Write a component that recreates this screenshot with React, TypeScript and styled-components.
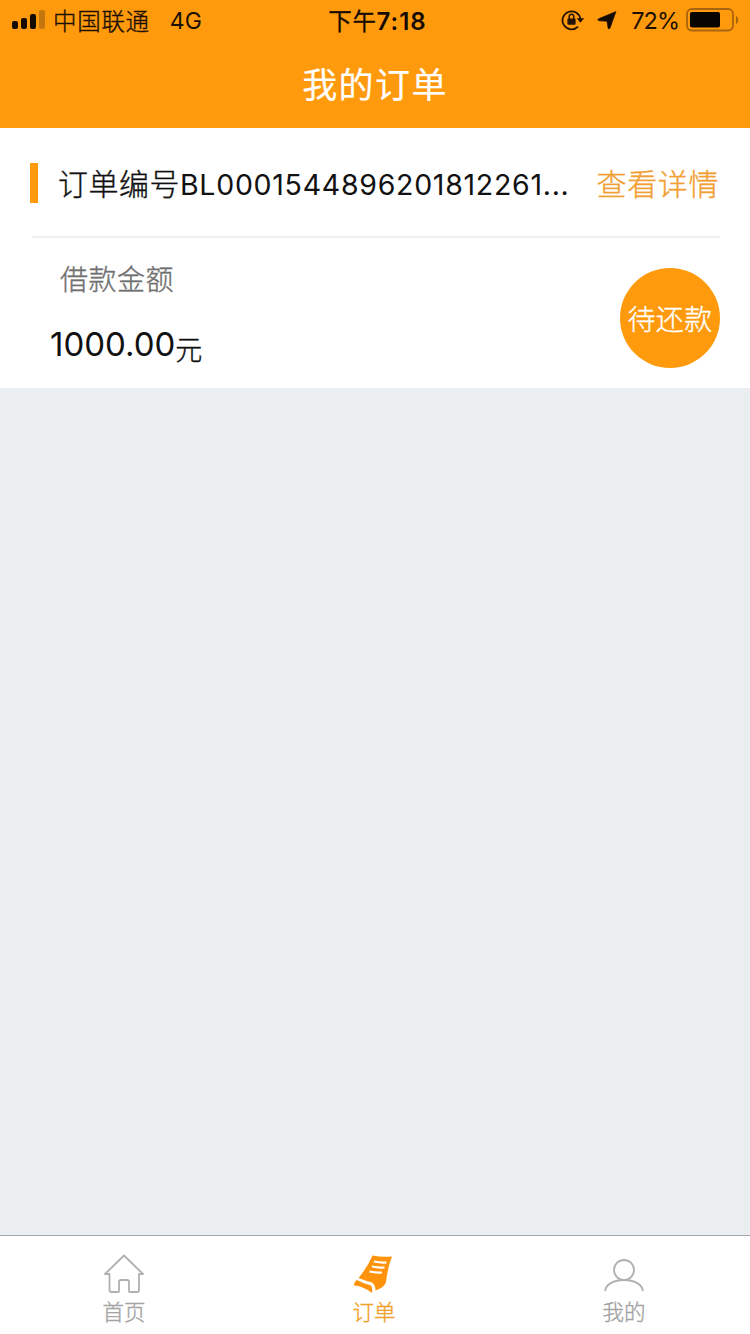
import React from "react";
import styled, { createGlobalStyle } from "styled-components";

const ORANGE = "#ff9a0c";

const GlobalStyle = createGlobalStyle`
  * { box-sizing: border-box; }
  body {
    margin: 0;
    background: #eaeef1;
    font-family: Inter, "Noto Sans CJK SC", sans-serif;
    color: #111;
  }
`;

const Screen = styled.div`
  width: 750px;
  height: 1334px;
  display: flex;
  flex-direction: column;
  overflow: hidden;
  background: #eaeef1;
`;

const Header = styled.header`
  height: 128px;
  flex: none;
  background: ${ORANGE};
`;

const StatusBar = styled.div`
  height: 41px;
  display: grid;
  grid-template-columns: 1fr auto 1fr;
  align-items: center;
  padding: 0 11px 0 12px;
  color: #1c1004;
`;

const StatusGroup = styled.div<{ $end?: boolean }>`
  display: flex;
  align-items: center;
  justify-content: ${(p) => (p.$end ? "flex-end" : "flex-start")};
`;

const Text = styled.span<{
  $size: number;
  $spacing?: number;
  $weight?: number;
  $color?: string;
}>`
  font-size: ${(p) => p.$size}px;
  letter-spacing: ${(p) => p.$spacing ?? 0}px;
  font-weight: ${(p) => p.$weight ?? 400};
  color: ${(p) => p.$color ?? "inherit"};
  line-height: 1.4;
  white-space: nowrap;
`;

const SoftText = styled(Text)`
  font-weight: 300;
  -webkit-text-stroke: 0.35px currentColor;
`;

const Clock = styled.div`
  display: flex;
  align-items: baseline;
  padding: 2px 0 0 4px;
  color: #160b02;
`;

const Meridiem = styled(Text)`
  -webkit-text-stroke: 0.3px currentColor;
`;

const Carrier = styled(SoftText)`
  margin: 0 20px 0 8px;
  padding-top: 3px;
`;

const Network = styled(Text)`
  padding-top: 2px;
`;

const Percent = styled(Text)`
  margin: 0 7px 0 14px;
  padding-top: 2px;
`;

const LocationIcon = styled.svg`
  margin-left: 12px;
`;

const Title = styled.h1`
  margin: 0;
  height: 82px;
  display: flex;
  align-items: center;
  justify-content: center;
  color: #fff;
  font-size: 35px;
  font-weight: 400;
  letter-spacing: 1.4px;
  -webkit-text-stroke: 0.2px #fff;
`;

const Card = styled.section`
  height: 260px;
  flex: none;
  padding: 0 30px;
  background: #fff;
`;

const OrderRow = styled.div`
  height: 108px;
  display: flex;
  align-items: center;
  padding-top: 2px;
`;

const Divider = styled.hr`
  height: 2px;
  margin: 0 0 0 2px;
  border: 0;
  background: #eeeff1;
`;

const Marker = styled.i`
  width: 8px;
  height: 40px;
  margin-right: 20px;
  background: ${ORANGE};
`;

const OrderNumber = styled.div`
  flex: 1;
  display: flex;
  align-items: baseline;
  padding-top: 1px;
`;

const DetailLink = styled(SoftText)`
  margin-right: 1px;
  padding-top: 2px;
`;

const AmountRow = styled.div`
  height: 150px;
  display: flex;
  justify-content: space-between;
  padding-top: 30px;
`;

const Amount = styled.div`
  display: flex;
  flex-direction: column;
`;

const AmountLabel = styled(SoftText)`
  margin: -7px 0 0 30px;
`;

const AmountValue = styled.div`
  display: flex;
  align-items: center;
  margin: 18px 0 0 20px;
`;

const Unit = styled(SoftText)`
  padding-top: 14px;
`;

const Status = styled.div`
  width: 100px;
  height: 100px;
  padding-top: 5px;
  border-radius: 50%;
  display: flex;
  align-items: center;
  justify-content: center;
  background: ${ORANGE};
`;

const TabBar = styled.nav`
  height: 99px;
  flex: none;
  margin-top: auto;
  display: grid;
  grid-template-columns: repeat(3, 250px);
  background: #fff;
  border-top: 1px solid #a3a6a8;
`;

const Tab = styled.div<{ $active?: boolean }>`
  display: flex;
  flex-direction: column;
  align-items: center;
  gap: 2px;
  padding: 17px 2px 0 0;
  color: ${(p) => (p.$active ? "#f0a029" : "#a3a3a3")};
`;

const TabIcon = styled.svg`
  width: 44px;
  height: 42px;
  flex: none;
`;

const Signal = () => (
  <svg width="33" height="20" viewBox="0 0 33 20">
    <rect x="0" y="11" width="6" height="8" rx="2" fill="#160b02" />
    <rect x="9" y="8" width="6" height="11" rx="2" fill="#160b02" />
    <rect x="18" y="4" width="6" height="15" rx="2" fill="#160b02" />
    <rect x="27" y="0" width="6" height="19" rx="2" fill="#c5750e" />
  </svg>
);

const RotationLock = () => (
  <svg width="24" height="22" viewBox="0 0 24 22" fill="none" stroke="#251304">
    <path d="M17 17.6A9 9 0 1 1 19.4 10" strokeWidth="1.8" />
    <path d="M15.6 9.3H23.2L19.4 13.8Z" fill="#251304" stroke="none" />
    <rect x="6.4" y="9.5" width="8.2" height="6.3" rx="1" fill="#251304" stroke="none" />
    <path d="M8.2 10V7.5a2.3 2.3 0 0 1 4.6 0v2.5" strokeWidth="1.5" />
  </svg>
);

const Battery = () => (
  <svg width="53" height="24" viewBox="0 0 53 24">
    <rect x="1" y="1" width="46" height="21.5" rx="5" fill="none" stroke="#a9640e" strokeWidth="1.8" />
    <rect x="4" y="4" width="30" height="15.5" rx="2" fill="#080401" />
    <path d="M50 8v8c3-1 3-7 0-8Z" fill="#a9640e" />
  </svg>
);

export default function App() {
  return (
    <Screen>
      <GlobalStyle />
      <Header>
        <StatusBar>
          <StatusGroup>
            <Signal />
            <Carrier $size={23.5} $spacing={0.7}>中国联通</Carrier>
            <Network $size={23}>4G</Network>
          </StatusGroup>
          <Clock>
            <Meridiem $size={23.5} $spacing={0.6}>下午</Meridiem>
            <Text $size={24} $spacing={1} $weight={600}>7:18</Text>
          </Clock>
          <StatusGroup $end>
            <RotationLock />
            <LocationIcon width="20" height="20" viewBox="0 0 20 20">
              <path d="M19 1.5 13 18.2Q11.5 19.8 11 17.8L10 11.3 2 10.8Q-.2 9.8 1.5 8.8Z" fill="#160b02" stroke="#160b02" strokeWidth=".6" />
            </LocationIcon>
            <Percent $size={23.5} $spacing={-1}>72%</Percent>
            <Battery />
          </StatusGroup>
        </StatusBar>
        <Title>我的订单</Title>
      </Header>
      <Card>
        <OrderRow>
          <Marker />
          <OrderNumber>
            <SoftText $size={30} $spacing={0.5}>订单编号</SoftText>
            <Text $size={28.5} $spacing={0.72}>BL0001544896201812261...</Text>
          </OrderNumber>
          <DetailLink $size={30} $spacing={0.6} $color="#f2a034">查看详情</DetailLink>
        </OrderRow>
        <Divider />
        <AmountRow>
          <Amount>
            <AmountLabel $size={28} $spacing={0.5} $color="#707070">借款金额</AmountLabel>
            <AmountValue>
              <Text $size={33}>1000.00</Text>
              <Unit $size={27}>元</Unit>
            </AmountValue>
          </Amount>
          <Status>
            <SoftText $size={28} $spacing={0.3} $color="#fff">待还款</SoftText>
          </Status>
        </AmountRow>
      </Card>
      <TabBar>
        <Tab>
          <TabIcon viewBox="0 0 44 42" fill="none" stroke="#b0b0b0" strokeWidth="1.8">
            <path d="M7.5 21H3L22 2.5 41 21h-4v16q0 2-2 2H28q-1 0-1-1V29q0-2-2-2h-6q-2 0-2 2v9q0 1-1 1H9.5q-2 0-2-2Z" strokeLinejoin="round" />
          </TabIcon>
          <SoftText $size={21.5}>首页</SoftText>
        </Tab>
        <Tab $active>
          <TabIcon viewBox="0 0 44 42">
            <path d="M20.5 2.5Q30 4.5 40 3.5 36 13 34 29 33 34 23.5 37.5 23.5 32 20 29.500 14 28 6.500 25 15 15 20.500 2.500Z" fill="#ff930c" />
            <path d="M5 27Q2 28.500 2 32.500q8 0 18 7.500.8-5-1-7.500Q12 31 5 27Z" fill="#ff930c" />
            <path d="M22 8.500q6 1.500 12.500 1M20 13.500q6 1.500 12.500 1M17.500 18.500q6 1.500 12.500 1" fill="none" stroke="#fff" strokeWidth="2.2" />
          </TabIcon>
          <SoftText $size={21.5}>订单</SoftText>
        </Tab>
        <Tab>
          <TabIcon viewBox="0 0 44 42" fill="none" stroke="#b0b0b0" strokeWidth="1.8">
            <circle cx="22" cy="17" r="10" />
            <path d="M3 38C4 31 12 27 22 27s18 4 19 11" />
          </TabIcon>
          <SoftText $size={21.5}>我的</SoftText>
        </Tab>
      </TabBar>
    </Screen>
  );
}
